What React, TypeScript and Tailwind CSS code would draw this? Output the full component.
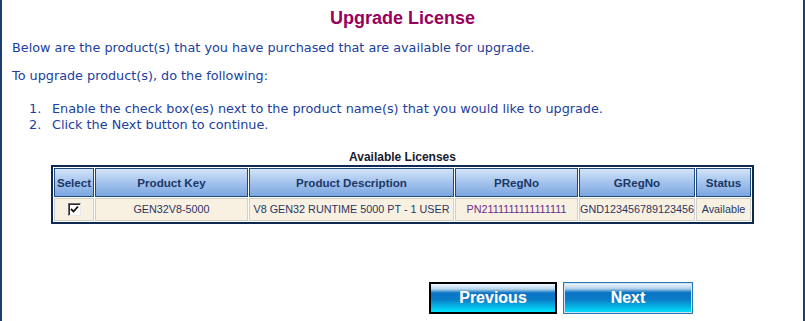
const columns = [
  { label: "Select", width: "w-[40px]" },
  { label: "Product Key", width: "w-[153px]" },
  { label: "Product Description", width: "w-[205px]" },
  { label: "PRegNo", width: "w-[123px]" },
  { label: "GRegNo", width: "w-[116px]" },
  { label: "Status", width: "w-[55px]" },
];

const row = {
  key: "GEN32V8-5000",
  description: "V8 GEN32 RUNTIME 5000 PT - 1 USER",
  pregno: "PN2111111111111111",
  gregno: "GND123456789123456",
  status: "Available",
};

const buttonGradient =
  "bg-[linear-gradient(to_bottom,#f4faff_0%,#b8d4ec_18%,#0a74c4_32%,#0a7cc8_55%,#00e4ff_100%)]";

const cell = "whitespace-nowrap overflow-hidden border border-[#cfcfcf] bg-[#f8f1e2] p-0";

function CheckBox() {
  return (
    <span className="inline-flex h-[13px] w-[13px] items-center justify-center border border-t-[#6b6b6b] border-l-[#6b6b6b] border-r-[#e8e8e8] border-b-[#e8e8e8] bg-white shadow-[inset_1px_1px_0_#2b2b2b]">
      <svg width="9" height="9" viewBox="0 0 9 9">
        <path d="M1 4 L3.5 6.5 L8 1.5" fill="none" stroke="#111" strokeWidth="1.8" />
      </svg>
    </span>
  );
}

export default function App() {
  return (
    <div className="h-[321px] w-[805px] overflow-hidden border-x-2 border-[#1c3f73] bg-white font-['DejaVu_Sans',Verdana,sans-serif] text-[12.8px] text-[#2040a0]">
      <h1 className="pt-[7px] text-center font-['Liberation_Sans',Arial,sans-serif] text-[18px] font-bold leading-[22px] text-[#99005c]">
        Upgrade License
      </h1>
      <p className="mt-[11px] pl-[10px] leading-[16px]">
        Below are the product(s) that you have purchased that are available for upgrade.
      </p>
      <p className="mt-[12px] pl-[10px] leading-[16px]">To upgrade product(s), do the following:</p>
      <ol className="mt-[17px] leading-[16px]">
        <li className="flex">
          <span className="w-[50px] pl-[27px]">1.</span>
          <span>Enable the check box(es) next to the product name(s) that you would like to upgrade.</span>
        </li>
        <li className="flex">
          <span className="w-[50px] pl-[27px]">2.</span>
          <span>Click the Next button to continue.</span>
        </li>
      </ol>

      <div className="mt-[17px] font-['Liberation_Sans',Arial,sans-serif] text-[10.8px]">
        <div className="text-center text-[12px] font-bold leading-[14px] text-[#1a1a2e]">Available Licenses</div>
        <table className="mx-auto mt-[1px] w-[703px] table-fixed border-separate border-spacing-[1px] border-2 border-[#0f2a52]">
          <thead>
            <tr>
              {columns.map((c) => (
                <th
                  key={c.label}
                  className={`${c.width} h-[29px] whitespace-nowrap border border-[#1f4a80] bg-[linear-gradient(to_bottom,#d4e4f8_0%,#a8c6ee_45%,#7aa6e0_100%)] p-0 text-center text-[11.6px] font-bold leading-[14px] text-[#1b3766]`}
                >
                  {c.label}
                </th>
              ))}
            </tr>
          </thead>
          <tbody>
            <tr className="text-center leading-[13px]">
              <td className={`h-[23px] ${cell}`}>
                <span className="flex justify-center">
                  <CheckBox />
                </span>
              </td>
              <td className={`${cell} text-[#2a3560]`}>{row.key}</td>
              <td className={`${cell} text-[#2a3560]`}>{row.description}</td>
              <td className={`${cell} text-[#6b2c8c]`}>{row.pregno}</td>
              <td className={`${cell} text-[#2a3560]`}>{row.gregno}</td>
              <td className={`${cell} text-[#2a3560]`}>{row.status}</td>
            </tr>
          </tbody>
        </table>
      </div>

      <div className="mt-[58px] flex gap-[6px] pl-[427px] font-['Liberation_Sans',Arial,sans-serif]">
        <button
          className={`h-[32px] w-[128px] border-2 border-black ${buttonGradient} text-[16px] font-bold text-white [text-shadow:0_0_1px_#5a8ab8]`}
        >
          Previous
        </button>
        <button
          className={`h-[32px] w-[130px] border border-[#2a78b6] ${buttonGradient} text-[16px] font-bold text-white shadow-[inset_0_0_0_1px_#cfe2f2] [text-shadow:0_0_1px_#5a8ab8]`}
        >
          Next
        </button>
      </div>
    </div>
  );
}
